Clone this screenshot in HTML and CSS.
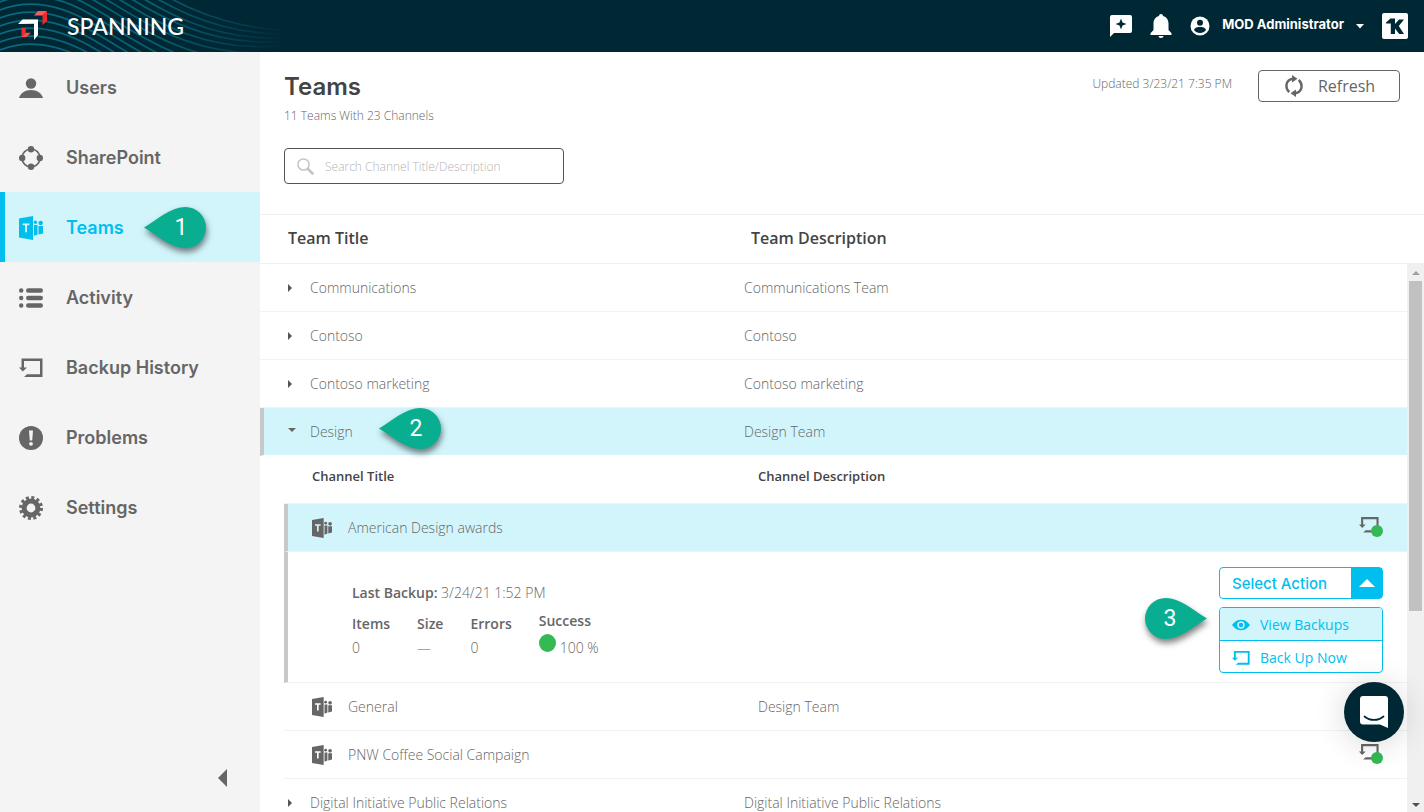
FILE: index.html
```html
<!DOCTYPE html>
<html lang="en">
<head>
<meta charset="utf-8">
<title>Spanning - Teams</title>
<link rel="stylesheet" href="styles.css">
</head>
<body>
<svg class="sprite" aria-hidden="true">
  <symbol id="i-teams" viewBox="0 0 24 24">
    <path fill="currentColor" fill-rule="evenodd" d="M0 2.400 14 0v24L0 21.600ZM3.600 7.400v1.900h2.400v7h2v-7h2.400V7.400Z"/>
    <circle cx="16.400" cy="6.200" r="1.700" fill="currentColor"/><circle cx="21.700" cy="7" r="2.200" fill="currentColor"/>
    <path fill="currentColor" d="M15 9h3.500v9.500L15 20ZM19.500 10H24v7.500l-4.500 1Z"/>
  </symbol>
  <symbol id="i-backup" viewBox="0 0 24 24">
    <path fill="currentColor" d="M2.500 2.500H23.500v18.500H5l3-2.700h13V5H5v6.500h3l-4.200 4L0 11.500h2.500Z"/>
  </symbol>
</svg>

<header class="topbar">
  <svg class="waves" viewBox="0 0 290 52" aria-hidden="true">
    <defs><linearGradient id="fade" gradientUnits="userSpaceOnUse" x1="0" y1="0" x2="285" y2="0"><stop offset="0" stop-color="#086a80"/><stop offset=".55" stop-color="#075f73"/><stop offset="1" stop-color="#022836"/></linearGradient></defs>
    <g fill="none" stroke="url(#fade)" stroke-width="1.700">
      <path d="M0-62C25-72 55-70 90-50C140-22 190 24 280 30"/>
      <path d="M0-54C25-64 55-62 90-42C140-14 190 32 280 34"/>
      <path d="M0-46C25-56 55-54 90-34C140-6 190 40 280 38"/>
      <path d="M0-38C25-48 55-46 90-26C140 2 190 46 280 42"/>
      <path d="M0-30C25-40 55-38 90-18C140 10 190 53 280 46"/>
      <path d="M0-22C25-32 55-30 90-10C140 18 190 60 280 52"/>
      <path d="M0-14C25-24 55-22 90-2C140 26 190 68 280 60"/>
      <path d="M0-6C25-16 55-14 90 6C140 34 190 76 280 70"/>
      <path d="M0 2C25-8 55-6 90 14C140 42 190 84 280 80"/>
      <path d="M0 10C25 0 55 2 90 22C140 50 190 92 280 90"/>
      <path d="M0 18C25 8 55 10 90 30C140 58 190 100 280 98"/>
      <path d="M0 26C25 16 55 18 90 38C140 66 190 108 280 106"/>
      <path d="M0 34C25 24 55 26 90 46C140 74 190 116 280 114"/>
      <path d="M0 42C25 32 55 34 90 54"/>
      <path d="M0 50C25 40 55 42 90 62"/>
    </g>
  </svg>
  <a class="brand" href="#">
    <svg width="29" height="30" viewBox="0 0 29 30" aria-hidden="true">
      <path fill="#fff" d="M0 13 4.500 8.500H20V24l-4 5V12.800Z"/>
      <path fill="#ff5a5a" d="M16 4.500 20 0h9l-4.500 4.500Z"/><path fill="#ee2a2e" d="M29 0v10l-4.500 4V4.500Z"/>
      <path fill="#ee2a2e" d="M3.500 17h4.300v4.800L3.500 26Z"/><path fill="#ff4d4d" d="M7.800 21.800h5L8.500 26h-5Z"/>
    </svg>
    <span>SPANNING</span>
  </a>
  <div class="tools">
    <button class="icon-btn" aria-label="What's new"><svg width="22" height="22" viewBox="0 0 22 22"><path fill="#fff" fill-rule="evenodd" d="M2 0h18a2 2 0 0 1 2 2v14a2 2 0 0 1-2 2H4l-4 4V2a2 2 0 0 1 2-2Zm9 3.500L9.500 7.600 5.500 9l4 1.500L11 14.500l1.500-4 4-1.500-4-1.400Z"/></svg></button>
    <button class="icon-btn" aria-label="Notifications"><svg width="22" height="24" viewBox="0 0 22 24"><path fill="#fff" d="M11 0c1.200 0 2 .8 2 1.900C16.800 2.800 18.500 6 18.500 9.500V16l3 3.300V21H.5v-1.700l3-3.300V9.500C3.500 6 5.200 2.800 9 1.900 9 .8 9.800 0 11 0ZM8.500 22h5a2.500 2 0 0 1-5 0Z"/></svg></button>
    <button class="account"><svg width="20" height="20" viewBox="0 0 20 20" aria-hidden="true"><circle cx="10" cy="10" r="9.500" fill="#fff"/><circle cx="10" cy="6.700" r="3" fill="#002734"/><path fill="#002734" d="M4 14c.5-2.500 4-3 6-3s5.500.5 6 3c-1.400 2-3.500 3-6 3s-4.600-1-6-3Z"/></svg><span>MOD Administrator</span><svg width="8" height="5" viewBox="0 0 8 5" aria-hidden="true"><path fill="#fff" d="M0 0h8L4 4.500Z"/></svg></button>
    <button class="icon-btn" aria-label="KaseyaOne"><svg width="26" height="26" viewBox="0 0 26 26"><rect width="26" height="26" rx="2" fill="#fff"/><path fill="#002734" d="M4 9.500 8.500 5.500H13V11l4-4.500h5L16.800 13 22 21h-4.800L13 15.500V21H8.800V10.500H4Z"/></svg></button>
  </div>
</header>

<div class="shell">
  <nav class="sidebar" aria-label="Main">
    <a class="nav-item" href="#"><svg viewBox="0 0 24 24"><circle cx="12" cy="7.500" r="5.200" fill="currentColor"/><path fill="currentColor" d="M0 22c1.500-5 6-8 12-8s10.500 3 12 8Z"/></svg>Users</a>
    <a class="nav-item" href="#"><svg viewBox="0 0 24 24"><circle cx="12" cy="12" r="9" fill="none" stroke="currentColor" stroke-width="1.600"/><g fill="currentColor"><circle cx="12" cy="3.200" r="3.200"/><circle cx="12" cy="20.800" r="3.200"/><circle cx="3.200" cy="12" r="3.200"/><circle cx="20.800" cy="12" r="3.200"/></g></svg>SharePoint</a>
    <a class="nav-item active" href="#" aria-current="page"><svg><use href="#i-teams"/></svg>Teams
      <span class="callout callout-nav"><svg viewBox="0 0 62 41"><path d="M0 20.500C14 12 27 0 41.500 0a20.500 20.500 0 0 1 0 41C27 41 14 29 0 20.500Z"/></svg><b>1</b></span></a>
    <a class="nav-item" href="#"><svg viewBox="0 0 24 24" fill="currentColor"><circle cx="2.200" cy="4.500" r="2.200"/><circle cx="2.200" cy="12" r="2.200"/><circle cx="2.200" cy="19.500" r="2.200"/><rect x="7" y="2.300" width="17" height="4.400" rx="2.200"/><rect x="7" y="9.800" width="17" height="4.400" rx="2.200"/><rect x="7" y="17.300" width="17" height="4.400" rx="2.200"/></svg>Activity</a>
    <a class="nav-item" href="#"><svg><use href="#i-backup"/></svg>Backup History</a>
    <a class="nav-item" href="#"><svg viewBox="0 0 24 24"><circle cx="12" cy="12" r="12" fill="currentColor"/><path fill="#f4f4f4" d="M10 4.500h4l-.8 10h-2.400Z"/><circle cx="12" cy="17.800" r="1.900" fill="#f4f4f4"/></svg>Problems</a>
    <a class="nav-item" href="#"><svg viewBox="0 0 24 24"><circle cx="12" cy="12" r="6.900" fill="none" stroke="currentColor" stroke-width="5"/><circle cx="12" cy="12" r="10.400" fill="none" stroke="currentColor" stroke-width="3.200" stroke-dasharray="2.950 2.495"/></svg>Settings</a>
    <button class="collapse" aria-label="Collapse menu"><svg width="9" height="18" viewBox="0 0 9 18"><path fill="#666" d="M9 0v18L0 9Z"/></svg></button>
  </nav>

  <main class="content">
    <div class="page-head">
      <div>
        <h1>Teams</h1>
        <p class="summary">11 Teams With 23 Channels</p>
      </div>
      <div class="head-side">
        <span class="updated">Updated 3/23/21 7:35 PM</span>
        <button class="refresh"><svg width="18" height="22" viewBox="0 0 18 22" aria-hidden="true"><g fill="none" stroke="#666" stroke-width="2.400"><path d="M4.300 17C.2 13.500-.2 5 8 3.800"/><path d="M13.700 5C17.800 8.500 18.200 17 10 18.200"/></g><path fill="#666" d="M7 0 12.500 3.800 7 7.600ZM11 22 5.500 18.200 11 14.400Z"/></svg>Refresh</button>
      </div>
    </div>
    <label class="search">
      <svg width="17" height="17" viewBox="0 0 17 17" aria-hidden="true"><circle cx="6.500" cy="6.500" r="5.600" fill="none" stroke="#c4c4c4" stroke-width="1.500"/><path d="m11 11 4.500 4.500" stroke="#c4c4c4" stroke-width="2.600" stroke-linecap="round"/></svg>
      <input type="text" placeholder="Search Channel Title/Description" aria-label="Search Channel Title/Description">
    </label>

    <table class="team-head">
      <thead><tr><th class="col-title">Team Title</th><th>Team Description</th></tr></thead>
    </table>

    <div class="viewport">
      <div class="rows">
        <table class="teams">
          <tbody>
            <tr><td class="col-title"><span class="caret"></span>Communications</td><td>Communications Team</td></tr>
            <tr><td class="col-title"><span class="caret"></span>Contoso</td><td>Contoso</td></tr>
            <tr><td class="col-title"><span class="caret"></span>Contoso marketing</td><td>Contoso marketing</td></tr>
            <tr class="open"><td class="col-title"><span class="caret down"></span>Design
              <span class="callout callout-row"><svg viewBox="0 0 62 41"><path d="M0 20.500C14 12 27 0 41.500 0a20.500 20.500 0 0 1 0 41C27 41 14 29 0 20.500Z"/></svg><b>2</b></span></td><td>Design Team</td></tr>
            <tr class="nest"><td colspan="2">
              <table class="channels">
                <thead><tr><th class="col-channel">Channel Title</th><th>Channel Description</th><th class="col-status"></th></tr></thead>
                <tbody>
                  <tr class="selected"><td class="col-channel"><svg class="ch-icon"><use href="#i-teams"/></svg>American Design awards</td><td></td><td class="col-status"><span class="status"><svg><use href="#i-backup"/></svg><i></i></span></td></tr>
                  <tr class="detail"><td colspan="3">
                    <div class="detail-body">
                      <div class="stats">
                        <p class="last"><strong>Last Backup:</strong> 3/24/21 1:52 PM</p>
                        <dl>
                          <div><dt>Items</dt><dd>0</dd></div>
                          <div><dt>Size</dt><dd>—</dd></div>
                          <div><dt>Errors</dt><dd>0</dd></div>
                          <div class="success"><dt>Success</dt><dd><i></i>100 %</dd></div>
                        </dl>
                      </div>
                      <div class="actions">
                        <button class="select-action"><span>Select Action</span><span class="toggle"><svg width="16" height="8" viewBox="0 0 16 8"><path fill="#fff" d="M0 8 8 0l8 8Z"/></svg></span></button>
                        <div class="menu">
                          <button class="on"><svg viewBox="0 0 18 18"><path fill="currentColor" fill-rule="evenodd" d="M0 9c2.500-3.500 5.500-5.200 9-5.200S15.500 5.500 18 9c-2.500 3.500-5.500 5.200-9 5.200S2.500 12.500 0 9Zm9-3.700a3.700 3.700 0 1 0 0 7.400 3.700 3.700 0 0 0 0-7.400Z"/><circle cx="9" cy="9" r="2.200" fill="currentColor"/></svg>View Backups</button>
                          <button><svg><use href="#i-backup"/></svg>Back Up Now</button>
                        </div>
                        <span class="callout callout-menu"><svg viewBox="0 0 62 41"><path d="M62 20.500C48 12 35 0 20.500 0a20.500 20.500 0 0 0 0 41C35 41 48 29 62 20.500Z"/></svg><b>3</b></span>
                      </div>
                    </div>
                  </td></tr>
                  <tr><td class="col-channel"><svg class="ch-icon"><use href="#i-teams"/></svg>General</td><td>Design Team</td><td class="col-status"></td></tr>
                  <tr><td class="col-channel"><svg class="ch-icon"><use href="#i-teams"/></svg>PNW Coffee Social Campaign</td><td></td><td class="col-status"><span class="status"><svg><use href="#i-backup"/></svg><i></i></span></td></tr>
                </tbody>
              </table>
            </td></tr>
            <tr><td class="col-title"><span class="caret"></span>Digital Initiative Public Relations</td><td>Digital Initiative Public Relations</td></tr>
          </tbody>
        </table>
      </div>
      <div class="scrollbar" aria-hidden="true">
        <svg width="8" height="4" viewBox="0 0 8 4"><path fill="#a0a0a0" d="M0 4 4 0l4 4Z"/></svg>
        <div class="track"><div class="thumb"></div></div>
        <svg width="8" height="4" viewBox="0 0 8 4"><path fill="#505050" d="M0 0h8L4 4Z"/></svg>
      </div>
    </div>
  </main>
</div>

<button class="chat" aria-label="Open chat"><svg width="28" height="32" viewBox="0 0 28 32"><path fill="#fff" d="M3 0h22a3 3 0 0 1 3 3v29l-8-3.500H3a3 3 0 0 1-3-3V3a3 3 0 0 1 3-3Z"/><path d="M4.500 20.500c5.500 4.600 13.500 4.600 19 0" fill="none" stroke="#002734" stroke-width="1.800" stroke-linecap="round"/></svg></button>
</body>
</html>
```

FILE: styles.css
```css
* { box-sizing: border-box; }
body {
  margin: 0;
  height: 100vh;
  display: flex;
  flex-direction: column;
  overflow: hidden;
  font: 300 14px/20px "Open Sans", sans-serif;
  color: #666;
  background: #fff;
}
button { font: inherit; color: inherit; background: none; border: 0; padding: 0; cursor: pointer; }
a { color: inherit; text-decoration: none; }
h1, p, dl, dd { margin: 0; }
svg { display: block; flex: none; }
.sprite { position: absolute; width: 0; height: 0; }

/* top bar */
.topbar {
  position: relative;
  flex: none;
  height: 52px;
  padding: 0 16px 0 18px;
  display: flex;
  align-items: center;
  justify-content: space-between;
  background: #002734;
  color: #fff;
}
.waves { position: absolute; left: 0; top: 0; width: 290px; height: 52px; }
.brand { position: relative; display: flex; align-items: center; gap: 20px; font: 500 23px/28px Lato, sans-serif; }
.tools { display: flex; align-items: center; gap: 18px; }
.account { display: flex; align-items: center; gap: 12px; font: 700 13px/20px Inter, sans-serif; }
.account span { padding-bottom: 4px; }

/* side navigation */
.shell { flex: 1; display: flex; min-height: 0; }
.sidebar { flex: none; width: 260px; display: flex; flex-direction: column; background: #f4f4f4; }
.nav-item {
  position: relative;
  height: 70px;
  padding: 2px 0 0 19px;
  display: flex;
  align-items: center;
  gap: 23px;
  font: 600 18px/24px Inter, sans-serif;
}
.nav-item > svg { width: 24px; height: 24px; }
.nav-item.active { color: #00bfee; background: #d2f5fc; border-left: 5px solid #00bfee; padding-left: 14px; }
.collapse { margin: auto 33px 25px auto; }

/* numbered markers */
.callout { position: absolute; width: 62px; height: 41px; z-index: 2; }
.callout svg { width: 62px; height: 41px; fill: #09ae91; filter: drop-shadow(1px 4px 3px rgba(0, 0, 0, .5)); }
.callout b { position: absolute; inset: 0 0 0 12px; font: 400 23px/41px Roboto, sans-serif; color: #fff; text-align: center; }
.callout-nav { left: 139px; top: 15px; }
.callout-row { left: 115px; top: 0; }
.callout-menu { right: 176px; top: 31px; }
.callout-menu b { inset: 0 12px 0 0; }

/* page heading */
.content { flex: 1; min-width: 0; display: flex; flex-direction: column; }
.page-head { display: flex; justify-content: space-between; padding: 18px 24px 0; }
h1 { font: 600 24px/34px Inter, sans-serif; color: #444; }
.summary { font-size: 12px; padding-top: 2px; }
.head-side { display: flex; align-items: flex-start; gap: 26px; }
.updated { font-size: 12px; line-height: 28px; }
.refresh {
  width: 142px;
  height: 32px;
  display: flex;
  align-items: center;
  justify-content: center;
  gap: 15px;
  padding-left: 2px;
  border: 1px solid #666;
  border-radius: 4px;
  font-size: 16px;
  font-weight: 400;
}
.search {
  width: 280px;
  height: 36px;
  margin: 22px 24px 30px;
  padding: 0 12px;
  display: flex;
  align-items: center;
  gap: 11px;
  border: 1px solid #555;
  border-radius: 4px;
}
.search input { flex: 1; min-width: 0; border: 0; outline: 0; padding: 2px 0 0; background: none; font: inherit; font-size: 12px; }
.search input::placeholder { color: #b4b4b4; opacity: 1; }

/* tables */
table { width: 100%; border-collapse: separate; border-spacing: 0; table-layout: fixed; }
th { text-align: left; font-weight: 600; color: #444; }
td, th { padding: 0; }
.team-head { flex: none; }
.team-head th { height: 50px; font-size: 16px; padding: 0 0 2px 7px; border-top: 1px solid #f0f0f0; border-bottom: 1px solid #f0f0f0; }
.team-head .col-title { padding-left: 28px; }
.col-title { width: 484px; }
.viewport { flex: 1; min-height: 0; display: flex; }
.rows { flex: 1; min-width: 0; overflow: hidden; }
.teams td { height: 48px; border-bottom: 1px solid #f2f2f2; }
.teams td.col-title { position: relative; padding-left: 50px; }
.caret { position: absolute; left: 28px; top: 20px; border: 4px solid transparent; border-left: 4px solid #555; border-right: 0; }
.caret.down { left: 24px; top: 20px; border: 4px solid transparent; border-top: 4px solid #666; border-bottom: 0; }
.open td { background: #d2f5fc; }
.teams .open td { border-bottom-color: #fff; }
.teams .open td.col-title { border-left: 4px solid #c8c8c8; padding-left: 46px; }
.teams .nest > td { padding-left: 24px; border: 0; }
.channels th { height: 48px; font-size: 13px; padding-bottom: 8px; border-bottom: 1px solid #f2f2f2; }
.col-channel { width: 474px; }
.channels th.col-channel { padding-left: 28px; }
.channels td.col-channel { padding-left: 28px; }
.ch-icon { display: inline-block; width: 20px; height: 20px; margin-right: 16px; vertical-align: -5px; }
.col-status { width: 60px; }
.channels .selected td { background: #d2f5fc; }
.channels .selected td.col-channel { border-left: 4px solid #c8c8c8; padding-left: 24px; }
.status { position: relative; display: block; width: 24px; margin: 0 0 4px 12px; padding-bottom: 2px; }
.status svg { width: 20px; height: 20px; }
.status i { position: absolute; right: 0; bottom: 0; width: 12px; height: 12px; border-radius: 50%; background: #34b954; }

/* channel detail */
.channels .detail td { border-left: 4px solid #c8c8c8; }
.detail-body { height: 130px; padding: 15px 24px 0 64px; display: flex; justify-content: space-between; }
.last { padding-top: 16px; }
strong, dt { font-weight: 600; }
dl { display: flex; gap: 27px; padding-top: 8px; }
dl > div { padding-top: 3px; }
dt { height: 24px; }
dd { display: flex; align-items: center; gap: 4px; }
.success { padding-top: 0; }
.success dt { height: 27px; }
.success dd { align-items: flex-end; height: 20px; }
.success i { width: 17px; height: 18px; margin-bottom: 6px; border-radius: 50%; background: #34b954; }
.actions { position: relative; width: 164px; color: #00bfee; }
.select-action {
  width: 100%;
  height: 32px;
  display: flex;
  align-items: center;
  justify-content: space-between;
  padding-left: 12px;
  border: 1px solid #00bfee;
  border-radius: 4px;
  font: 500 15px/20px Inter, sans-serif;
}
.select-action > span:first-child { padding-top: 2px; }
.toggle { width: 31px; height: 30px; display: grid; place-items: center; background: #00bfee; }
.menu { margin-top: 8px; border: 1px solid #00bfee; border-radius: 4px; overflow: hidden; }
.menu button { width: 100%; height: 31px; display: flex; align-items: center; gap: 10px; padding: 2px 0 0 12px; font-weight: 400; }
.menu button svg { width: 18px; height: 18px; }
.menu .on { height: 33px; background: #d2f5fc; border-bottom: 1px solid #00bfee; }

/* scrollbar */
.scrollbar { flex: none; width: 17px; padding: 7px 0 5px; display: flex; flex-direction: column; align-items: center; background: #f0f0f0; }
.track { flex: 1; width: 13px; margin: 6px 0; }
.thumb { height: 64%; background: #c1c1c1; }

/* chat launcher */
.chat {
  position: fixed;
  right: 20px;
  bottom: 70px;
  width: 60px;
  height: 60px;
  display: grid;
  place-items: center;
  border-radius: 50%;
  background: #002734;
  box-shadow: 0 2px 32px rgba(0, 0, 0, .16);
}
```
